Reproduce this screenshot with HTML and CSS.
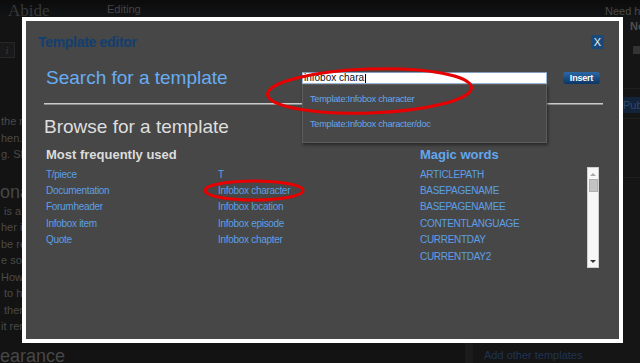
FILE: index.html
```html
<!DOCTYPE html>
<html>
<head lang="en">
    <meta charset="UTF-8">
    <title>Template editor</title>
    <link rel="stylesheet" href="styles.css">
</head>
<body>
    <div class="page">
        <div class="topbar">
            <span class="logo">Abide</span>
            <span class="crumb">Editing</span>
            <span class="help">Need help?</span>
        </div>
        <div class="main">
            <div class="article">
                <div class="tools"><span class="tool">i</span></div>
                <p class="txt first">
                    <span>the main character of</span>
                    <span>hen.She was</span>
                    <span>g. She never</span>
                </p>
                <h2 class="sub">onality</h2>
                <p class="txt">
                    <span>&nbsp;is a very</span>
                    <span>her in the</span>
                    <span>be really</span>
                    <span>e something</span>
                    <span>However</span>
                    <span>&nbsp;to help</span>
                    <span>&nbsp;them</span>
                    <span>it remains</span>
                </p>
                <h2 class="sub last">earance</h2>
            </div>
            <div class="side">
                <div class="side-head">Notes</div>
                <div class="side-check"></div>
                <div class="side-line"></div>
                <div class="side-btn">Publish</div>
                <div class="side-line near"></div>
                <div class="side-line low"></div>
                <div class="side-add">Add other templates</div>
            </div>
        </div>
    </div>

    <div class="modal">
        <div class="modal-head">
            <h2 class="modal-title">Template editor</h2>
            <span class="close">X</span>
        </div>
        <div class="search-row">
            <h3 class="search-title">Search for a template</h3>
            <div class="search-input">infobox chara<span class="caret"></span></div>
            <span class="insert">Insert</span>
        </div>
        <div class="rule"></div>
        <h3 class="browse-title">Browse for a template</h3>
        <div class="browse">
            <h4 class="col-title">Most frequently used</h4>
            <h4 class="col-title magic-title">Magic words</h4>
            <ul class="links">
                <li>T/piece</li>
                <li>Documentation</li>
                <li>Forumheader</li>
                <li>Infobox item</li>
                <li>Quote</li>
            </ul>
            <ul class="links">
                <li>T</li>
                <li>Infobox character</li>
                <li>Infobox location</li>
                <li>Infobox episode</li>
                <li>Infobox chapter</li>
            </ul>
            <div class="magic-box">
                <ul class="links">
                    <li>ARTICLEPATH</li>
                    <li>BASEPAGENAME</li>
                    <li>BASEPAGENAMEE</li>
                    <li>CONTENTLANGUAGE</li>
                    <li>CURRENTDAY</li>
                    <li>CURRENTDAY2</li>
                    <li>CURRENTDAYNAME</li>
                </ul>
                <div class="scroll">
                    <span class="arr-up"></span>
                    <span class="thumb"></span>
                    <span class="gap"></span>
                    <span class="arr-down"></span>
                </div>
            </div>
        </div>
        <div class="suggest">
            <div class="suggest-item">Template:Infobox character</div>
            <div class="suggest-item">Template:Infobox character/doc</div>
        </div>
    </div>

    <svg class="marks" width="640" height="363" viewBox="0 0 640 363">
        <ellipse cx="369.5" cy="91" rx="102" ry="22" transform="rotate(-2 369.5 91)" fill="none" stroke="#e60000" stroke-width="3"/>
        <ellipse cx="254" cy="190.5" rx="49" ry="9.5" fill="none" stroke="#e60000" stroke-width="3"/>
    </svg>
</body>
</html>
```

FILE: styles.css
```css
* {
    margin: 0;
    padding: 0;
}
body {
    width: 640px;
    height: 363px;
    overflow: hidden;
    position: relative;
    background: #111;
    font-family: "Liberation Sans", Arial, sans-serif;
}
ul {
    list-style: none;
}

/* page behind the dialog */
.page {
    height: 363px;
    overflow: hidden;
    background: #121212;
    color: #4a4a4a;
}
.topbar {
    height: 18px;
    display: flex;
    align-items: flex-start;
    background: linear-gradient(#0b0b0c, #131415);
    white-space: nowrap;
}
.topbar span {
    flex-shrink: 0;
}
.logo {
    font-family: "Liberation Serif", serif;
    font-size: 17px;
    line-height: 17px;
    color: #383838;
    padding: 2px 0 0 8px;
    width: 107px;
    box-sizing: border-box;
}
.crumb {
    font-size: 11px;
    line-height: 13px;
    color: #444;
    padding-top: 3px;
    width: 498px;
}
.help {
    font-size: 11px;
    line-height: 13px;
    color: #4a4a4a;
    padding-top: 5px;
}
.main {
    display: flex;
    height: 345px;
}
.article {
    width: 465px;
    flex-shrink: 0;
    background: #131313;
}
.tools {
    padding-top: 24px;
    height: 15px;
}
.tool {
    display: block;
    width: 14px;
    height: 14px;
    border: 1px solid #272727;
    border-left: none;
    background: #191919;
    color: #3c3c3c;
    font: italic 11px/14px "Liberation Serif", serif;
    text-align: center;
}
.txt {
    font-size: 11px;
    line-height: 16.5px;
    white-space: nowrap;
}
.txt span {
    display: block;
    padding-left: 1px;
}
.txt.first {
    margin-top: 56px;
}
.sub {
    font-weight: normal;
    font-size: 18px;
    line-height: 22px;
    margin-top: 18px;
    color: #474747;
}
.sub.last {
    margin-top: 10px;
}
.side {
    flex: 1;
    min-width: 0;
    overflow: hidden;
    border-left: 8px solid #1b1b1b;
    background: #151515;
    white-space: nowrap;
}
.side-head {
    font-weight: bold;
    font-size: 11px;
    line-height: 14px;
    color: #4f4f4f;
    padding: 1px 0 0 157px;
}
.side-check {
    width: 8px;
    height: 8px;
    background: #333;
    margin: 13px 0 0 160px;
}
.side-line {
    height: 1px;
    background: #1f1f1f;
    margin-top: 34px;
}
.side-btn {
    margin: 8px 0 0 147px;
    height: 16px;
    background: #13233a;
    color: #2b4a6d;
    font-size: 11px;
    line-height: 16px;
    padding-left: 3px;
}
.side-line.near {
    margin-top: 5px;
}
.side-line.low {
    margin-top: 58px;
}
.side-add {
    margin-top: 170px;
    padding-left: 11px;
    font-size: 11px;
    line-height: 14px;
    color: #1f3452;
}

/* dialog */
.modal {
    position: absolute;
    left: 22px;
    top: 17px;
    width: 601px;
    height: 326px;
    box-sizing: border-box;
    border: 4px solid #fff;
    background: #474747;
}
.modal-head {
    display: flex;
    justify-content: space-between;
    align-items: center;
    height: 14px;
    padding: 14px 15px 0 12px;
}
.modal-title {
    font-size: 14px;
    letter-spacing: -0.3px;
    line-height: 14px;
    color: #123f70;
}
.close {
    width: 13px;
    height: 14px;
    background: #1a4a7a;
    color: #e8eef5;
    font-size: 11px;
    line-height: 14px;
    text-align: center;
}
.search-row {
    display: flex;
    align-items: center;
    height: 24px;
    margin-top: 17px;
    padding-left: 20px;
}
.search-title {
    width: 256px;
    font-weight: normal;
    font-size: 19px;
    line-height: 24px;
    color: #68adf2;
}
.search-input {
    width: 245px;
    height: 12px;
    box-sizing: border-box;
    border: 1px solid #9ab8d8;
    border-top-color: #7f9cbc;
    background: #fff;
    color: #111;
    font-size: 10px;
    line-height: 10px;
    padding-left: 1px;
    display: flex;
    align-items: center;
}
.caret {
    width: 1px;
    height: 9px;
    background: #000;
    margin-left: 1px;
}
.insert {
    margin-left: 16px;
    width: 37px;
    height: 12px;
    border-radius: 3px;
    background: linear-gradient(#2b68a6, #0b3665);
    color: #fff;
    font-weight: bold;
    font-size: 9px;
    letter-spacing: -0.2px;
    line-height: 12px;
    text-align: center;
}
.rule {
    margin: 13px 16px 0 18px;
    height: 1px;
    background: #c9c9c9;
    border-bottom: 1px solid #8c8c8c;
}
.browse-title {
    margin-top: 10px;
    padding-left: 18px;
    font-weight: normal;
    font-size: 19px;
    line-height: 24px;
    color: #dedede;
}
.browse {
    display: grid;
    grid-template-columns: 172px 202px 179px;
    row-gap: 3.5px;
    margin-top: 8px;
    padding-left: 20px;
}
.col-title {
    grid-column: 1 / 3;
    font-size: 13px;
    line-height: 16px;
    color: #dcdcdc;
}
.magic-title {
    grid-column: 3;
    color: #62a6ee;
}
.links {
    font-size: 10px;
    letter-spacing: -0.3px;
    line-height: 16.4px;
    color: #5c9fe6;
    white-space: nowrap;
}
.magic-box {
    display: flex;
    height: 101px;
    overflow: hidden;
}
.magic-box .links {
    flex: 1;
}
.scroll {
    width: 12px;
    box-sizing: border-box;
    border: 1px solid #cfcfcf;
    background: #f7f7f7;
    display: flex;
    flex-direction: column;
    align-items: center;
    padding-top: 5px;
}
.arr-up {
    border-left: 3px solid transparent;
    border-right: 3px solid transparent;
    border-bottom: 3px solid #a8a8a8;
}
.thumb {
    margin-top: 3px;
    width: 9px;
    height: 13px;
    box-sizing: border-box;
    background: #c3c3c3;
    border: 1px solid #b0b0b0;
}
.gap {
    flex: 1;
}
.arr-down {
    border-left: 3px solid transparent;
    border-right: 3px solid transparent;
    border-top: 3px solid #333;
    margin-bottom: 4px;
}
.suggest {
    position: absolute;
    left: 276px;
    top: 63px;
    width: 245px;
    height: 59px;
    box-sizing: border-box;
    background: #484848;
    border: 1px solid #5c5c5c;
    box-shadow: 1px 2px 3px rgba(0, 0, 0, 0.45);
    padding: 2px 0 0 7px;
}
.suggest-item {
    font-size: 9.2px;
    letter-spacing: -0.25px;
    line-height: 25px;
    color: #67a6ea;
}
.marks {
    position: absolute;
    left: 0;
    top: 0;
}
```
